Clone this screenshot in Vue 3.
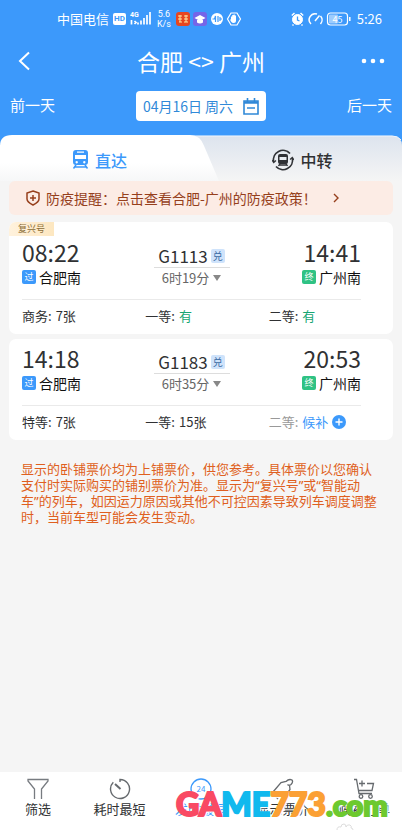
<script setup>
const trains = [
  {
    badge: '复兴号', dep: '08:22', from: '合肥南', no: 'G1113', dur: '6时19分', arr: '14:41', to: '广州南',
    seats: [
      { name: '商务', val: '7张', kind: 'count' },
      { name: '一等', val: '有', kind: 'ok' },
      { name: '二等', val: '有', kind: 'ok' },
    ],
  },
  {
    badge: '', dep: '14:18', from: '合肥南', no: 'G1183', dur: '6时35分', arr: '20:53', to: '广州南',
    seats: [
      { name: '特等', val: '7张', kind: 'count' },
      { name: '一等', val: '15张', kind: 'count' },
      { name: '二等', val: '候补', kind: 'wait' },
    ],
  },
]
const mark = [
  { t: 'GA', c: 'red' }, { t: 'ME', c: 'cyan' },
  { t: '773', c: 'orange' }, { t: '.com', c: 'green' },
]
</script>

<template>
  <div class="screen">
    <header class="top">
      <div class="status">
        <div class="status-left">
          <span class="carrier">中国电信</span>
          <span class="hd">HD</span>
          <svg class="signal" width="22" height="16" viewBox="0 0 22 16">
            <text x="0" y="6" font-size="7" font-weight="700" fill="#fff">4G</text>
            <path d="M1.500 9v4.500M4.500 10l1.500 1.500L4.500 13M8 11.500v2M11 9.500v4M14 7v6.500M17 4v9.500M20 1v12.500" fill="none" stroke="#fff" stroke-width="1.700" />
          </svg>
          <span class="speed">5.6<br>K/s</span>
          <svg width="66" height="14" viewBox="0 0 66 14" fill="none">
            <rect x="0" y="0" width="14" height="14" rx="3" fill="#e8461f" />
            <path d="M2 4h4M2 7h4M3 10h3M4 3v7M8 4h4M8 7h4M8 10h4M10 3v7" stroke="#ffe6a0" />
            <rect x="17" y="0" width="14" height="14" rx="3" fill="#7565e8" />
            <path d="M18.500 6 24 3l5.500 3L24 9z" fill="#fff" /><path d="M21 8v2.500q3 2 6 0V8" fill="#fff" />
            <circle cx="41" cy="7" r="6" fill="#fff" />
            <path d="M36.500 7h2l1-3v6M42 4v6M44 5v4M44 7h2" stroke="#3c99fb" stroke-width="1.200" />
            <path d="M55 1h6l3.500 6-3.500 6h-6l-3.500-6z" stroke="#fff" stroke-width="1.200" />
            <path d="M55 7.500V4.500h1.200V3h1.300v-.5h1.300v1H60V9q0 2-2.200 2Q56 11 55 9.500l-1-2z" fill="#fff" />
          </svg>
        </div>
        <div class="status-right">
          <svg width="60" height="14" viewBox="0 0 60 14" fill="none" stroke="#fff">
            <circle cx="6.500" cy="7.500" r="5" fill="#fff" />
            <path d="M.8 3.500 3.500 1M12.200 3.500 9.500 1M2.500 12.500l-1 1M10.500 12.500l1 1" stroke-width="1.500" />
            <path d="M6.500 4.500V8l2 1" stroke="#3c99fb" stroke-width="1.300" />
            <path d="M20 12a6 6 0 0 1 6-10M29.500 4a6 6 0 0 1 0 8M24 9l4.500-5.500" stroke-width="1.500" />
            <rect x="36.500" y="1" width="20" height="12" rx="3" stroke-width="1.200" />
            <rect x="38" y="2.500" width="9" height="9" rx="1" fill="#fff" fill-opacity=".5" stroke="none" />
            <path d="M58.800 5v4" stroke-width="1.500" />
            <text x="46.500" y="10.500" text-anchor="middle" font-size="9" fill="#fff" stroke="none">45</text>
          </svg>
          <span>5:26</span>
        </div>
      </div>
      <div class="title-row">
        <button class="plain" aria-label="返回">
          <svg width="14" height="20" viewBox="0 0 14 20" fill="none" stroke="#fff" stroke-width="2"><path d="M12 1.500 3 10l9 8.500" /></svg>
        </button>
        <h1>合肥 &lt;&gt; 广州</h1>
        <button class="plain" aria-label="更多">
          <svg width="24" height="6" viewBox="0 0 24 6" fill="#fff"><circle cx="3" cy="3" r="2.300" /><circle cx="12" cy="3" r="2.300" /><circle cx="21" cy="3" r="2.300" /></svg>
        </button>
      </div>
      <div class="date-row">
        <button class="plain day">前一天</button>
        <button class="date">
          <span>04月16日 周六</span>
          <svg width="16" height="17" viewBox="0 0 16 17" fill="none" stroke="#3089d8" stroke-width="1.600">
            <path d="M1 3h14v13H1zM4.500 0v5M11.500 0v5M4 10h8" /><path d="M1 4.500h14" stroke-width="2.500" />
          </svg>
        </button>
        <button class="plain day next">后一天</button>
      </div>
    </header>

    <nav class="tabs">
      <svg class="tab-shape" viewBox="0 0 402 48" preserveAspectRatio="none">
        <defs>
          <linearGradient id="tabGrey" x1="0" y1="0" x2="0" y2="1"><stop offset="0" stop-color="#dde4ee" /><stop offset="1" stop-color="#f5f5f5" /></linearGradient>
          <linearGradient id="tabWhite" x1="0" y1="0" x2="0" y2="1"><stop offset="0" stop-color="#fff" /><stop offset=".6" stop-color="#fff" /><stop offset="1" stop-color="#f6f7f8" /></linearGradient>
        </defs>
        <path d="M190 2h202q10 0 10 10v36H190z" fill="url(#tabGrey)" />
        <path d="M190 2h202q6 0 9 4" fill="none" stroke="#f4f8fd" />
        <path d="M0 48V12Q0 1 12 1h178q10 0 14 11l15 36z" fill="url(#tabWhite)" />
      </svg>
      <button class="tab on">
        <svg width="17" height="19" viewBox="0 0 17 19" fill="#3c99fb">
          <path fill-rule="evenodd" d="M4 0h9q3 0 3 3v9q0 3-3 3H4q-3 0-3-3V3q0-3 3-3zM5 1.500v1.300h7V1.500zM3 5v4h11V5zM4.700 11a1.200 1.200 0 1 0 .01 0zM12.300 11a1.200 1.200 0 1 0 .01 0z" />
          <path d="M4 15 1.500 18.500M13 15l2.500 3.500M3 17h11" stroke="#3c99fb" stroke-width="1.500" />
        </svg>
        直达
      </button>
      <button class="tab">
        <svg width="22" height="22" viewBox="0 0 22 22" fill="none" stroke="#303236">
          <path d="M1.700 13A9.500 9.500 0 0 1 18 4.500M20.300 9A9.500 9.500 0 0 1 4 17.500" stroke-width="1.700" />
          <path d="m0 11 1.700 2.500L4 11.500M22 11l-1.700-2.500L18 10.500" stroke-width="1.200" />
          <path fill="#303236" stroke="none" fill-rule="evenodd" d="M8 5h6q2 0 2 2v6q0 2-2 2H8q-2 0-2-2V7q0-2 2-2zM7.500 8v3h7V8z" />
          <path d="m8 14.500-1.500 2.500M14 14.500l1.500 2.500M7 16h8" stroke-width="1.300" />
        </svg>
        中转
      </button>
    </nav>

    <main class="body">
      <a class="notice" href="#policy">
        <svg width="14" height="16" viewBox="0 0 14 16" fill="none" stroke="#963f1c" stroke-width="1.500"><path d="M7 1 13 3v6q0 3-6 6-6-3-6-6V3zM7 5v6M4 8h6" /></svg>
        <span>防疫提醒：点击查看合肥-广州的防疫政策！</span>
        <svg width="6" height="10" viewBox="0 0 6 10" fill="none" stroke="#963f1c" stroke-width="1.400"><path d="m1 1 4 4-4 4" /></svg>
      </a>

      <article v-for="t in trains" :key="t.no" class="card">
        <span v-if="t.badge" class="badge">{{ t.badge }}</span>
        <div class="trip">
          <div class="end">
            <div class="time">{{ t.dep }}</div>
            <div class="station"><i class="tag pass">过</i>{{ t.from }}</div>
          </div>
          <div class="mid">
            <div class="no">{{ t.no }}<i class="swap">兑</i></div>
            <div class="dur">{{ t.dur }}<svg width="8" height="6" viewBox="0 0 8 6"><path d="M0 0h8L4 6z" fill="#888" /></svg></div>
          </div>
          <div class="end right">
            <div class="time">{{ t.arr }}</div>
            <div class="station"><i class="tag last">终</i>{{ t.to }}</div>
          </div>
        </div>
        <div class="seats">
          <div v-for="s in t.seats" :key="s.name" :class="s.kind">
            {{ s.name }}: <span>{{ s.val }}</span>
            <svg v-if="s.kind === 'wait'" width="14" height="14" viewBox="0 0 14 14"><circle cx="7" cy="7" r="7" fill="#3c99fb" /><path d="M3.500 7h7M7 3.500v7" stroke="#fff" stroke-width="1.400" /></svg>
          </div>
        </div>
      </article>

      <p class="tips">显示的卧铺票价均为上铺票价，供您参考。具体票价以您确认支付时实际购买的铺别票价为准。显示为“复兴号”或“智能动车”的列车，如因运力原因或其他不可控因素导致列车调度调整时，当前车型可能会发生变动。</p>
    </main>

    <footer class="bar">
      <button>
        <svg width="22" height="22" viewBox="0 0 22 22" fill="none" stroke="#777b80" stroke-width="1.300"><path d="M7.500 21V11L1 3V1.500h20V3l-6.500 8v10" /></svg>
        筛选
      </button>
      <button>
        <svg width="22" height="22" viewBox="0 0 22 22" fill="none" stroke="#666a6e" stroke-width="1.400"><path d="M11 4V1.500a9.500 9.500 0 1 1-6.700 2.800" /><path d="m6 6 5.500 5" stroke-width="2" /></svg>
        耗时最短
      </button>
      <button class="active">
        <svg width="22" height="22" viewBox="0 0 22 22" fill="none" stroke="#3c99fb" stroke-width="1.300"><circle cx="11" cy="11" r="10" /><text x="11" y="14" text-anchor="middle" font-size="8" fill="#3c99fb" stroke="none">24</text></svg>
        发时最早
      </button>
      <button>
        <svg width="22" height="22" viewBox="0 0 22 22" fill="none" stroke="#666a6e" stroke-width="1.300"><path d="M1 14 9 4.500l5-1q3-3 6-1.500 1.500 2-1 4.500-2 1.500-3.500 0M17.500 7.500l.5 4L11 21" /><path d="M1 14q-.5 1 .5 2L6 21" /></svg>
        显示票价
      </button>
      <button>
        <svg width="22" height="22" viewBox="0 0 22 22" fill="none" stroke="#666a6e" stroke-width="1.300"><path d="M1 1.500h2.500L6 15.500h13M14 5.500h6.500L19 12.500H6M9 2.500v6M6 5.500h6" /><circle cx="8" cy="18.500" r="1.800" /><circle cx="17.500" cy="18.500" r="1.800" /></svg>
        候补订单
      </button>
      <div class="mark"><span v-for="m in mark" :key="m.t" :class="m.c">{{ m.t }}</span></div>
      <svg class="paw" width="18" height="7" viewBox="0 0 18 7" fill="none" stroke="#ddd"><path d="M1 7q0-4 4-3 0-3 3-3 2 0 2 3 1-3 4-2 2 1 1 3 2 0 2 2" /></svg>
    </footer>
  </div>
</template>

<style>
body { margin: 0; background: #f5f5f5; }
</style>

<style scoped>
.screen { display: flex; flex-direction: column; min-height: 100vh; background: #f5f5f5; color: #303133; font-family: "Noto Sans CJK SC", sans-serif; font-size: 14px; line-height: 20px; }
button { border: 0; padding: 0; background: none; font: inherit; color: inherit; cursor: pointer; }
i { font-style: normal; }
svg { flex: none; }
.top { background: #3c99fb; color: #fff; padding-bottom: 13px; }
.status { display: flex; justify-content: space-between; align-items: center; height: 38px; padding: 0 20px 0 57px; }
.status-left, .status-right { display: flex; align-items: center; }
.carrier { font-size: 13px; margin-right: 4px; }
.hd { background: #fff; color: #3c99fb; border-radius: 2px; font: 700 8px/12px "Roboto", sans-serif; padding: 0 1px; margin-right: 4px; }
.signal { font-family: "Roboto", sans-serif; }
.speed { font: 9px/10px "Roboto", sans-serif; text-align: center; margin: 0 5px; }
.status-right { gap: 6px; font-size: 13px; }
.title-row { display: flex; justify-content: space-between; align-items: center; height: 46px; padding: 0 17px; }
.plain { color: #fff; }
.title-row .plain { width: 24px; display: flex; }
h1 { margin: 0; font-size: 23px; line-height: 32px; font-weight: 400; }
.date-row { display: grid; grid-template-columns: 1fr auto 1fr; align-items: center; padding: 7px 10px 0; }
.day { text-align: left; font-size: 15px; padding-bottom: 2px; }
.next { text-align: right; }
.date { display: flex; align-items: center; gap: 10px; height: 30px; padding: 0 7px; border-radius: 4px; background: #fff; color: #3089d8; font-size: 14px; }
.tabs { position: relative; display: grid; grid-template-columns: 1fr 1fr; gap: 4px; height: 47px; background: linear-gradient(#3c99fb 50%, #f5f5f5 50%); }
.tab-shape { position: absolute; inset: 0; width: 100%; height: 100%; }
.tab { position: relative; display: flex; align-items: center; justify-content: center; gap: 6px; padding-top: 4px; font-size: 16px; font-weight: 500; }
.on { color: #3c99fb; }
.body { flex: 1; display: flex; flex-direction: column; padding: 0 9px; }
.notice { display: flex; align-items: center; height: 34px; padding: 0 17px; border-radius: 6px; background: #fcece5; color: #963f1c; text-decoration: none; margin-bottom: 7px; }
.notice span { margin: 0 16px 0 6px; }
.card { position: relative; background: #fff; border-radius: 7px; padding: 15px 13px 8px; margin-bottom: 5px; }
.card + .card { padding-top: 4px; }
.badge { position: absolute; left: 0; top: 0; padding: 0 9px; border-radius: 7px 0 0 0; background: linear-gradient(90deg, #fff2dd, #fde7c0); color: #8a6c35; font-size: 9px; line-height: 14px; }
.trip { display: flex; justify-content: space-between; margin-right: 19px; border-bottom: 1px solid #eaeaea; height: 62px; }
.time { font-size: 23px; line-height: 31px; font-weight: 400; }
.station { display: flex; align-items: center; gap: 3px; line-height: 18px; color: #111; }
.right .time { text-align: right; }
.tag { border-radius: 2px; width: 14px; font-size: 9px; line-height: 14px; text-align: center; color: #fff; }
.pass { background: #3c99fb; }
.last { background: #2fc284; }
.mid { width: 76px; text-align: center; padding-top: 8px; }
.no { display: flex; align-items: center; justify-content: center; gap: 3px; font-size: 17px; line-height: 22px; border-bottom: 1px solid #ddd; }
.swap { background: #cfe3fb; color: #3b6ba3; border-radius: 2px; width: 14px; font-size: 10px; line-height: 14px; text-align: center; }
.dur { display: flex; align-items: center; justify-content: center; gap: 4px; color: #666; font-size: 13px; line-height: 20px; }
.seats { display: grid; grid-template-columns: 1fr 1fr 1fr; gap: 12px; font-size: 13px; line-height: 20px; padding-top: 6px; }
.seats > div { display: flex; align-items: center; gap: 4px; }
.ok span { color: #17a673; }
.wait { color: #999; }
.wait span { color: #3c99fb; }
.tips { margin: 16px 13px 16px 12px; color: #df5f20; font-family: "Noto Sans", "Noto Sans CJK SC", sans-serif; font-size: 13px; line-height: 16px; }
.bar { position: relative; display: flex; justify-content: space-between; padding: 0 12px; background: #fff; height: 58px; }
.bar button { display: flex; flex-direction: column; align-items: center; width: 52px; padding-top: 6px; font-size: 13px; line-height: 18px; }
.bar .active { color: #3c99fb; }
.mark { position: absolute; left: 176px; top: 15px; white-space: nowrap; font: 900 32px/34px "Lato", sans-serif; -webkit-text-stroke: 2px; text-shadow: 0 0 2px #fff, 2px 2px 1px #fff; }
.red { color: #f94a63; }
.cyan { color: #10b9ee; }
.orange { color: #fba034; }
.green { color: #6dc92f; font-size: 29px; }
.paw { position: absolute; right: 48px; bottom: 0; }
</style>
